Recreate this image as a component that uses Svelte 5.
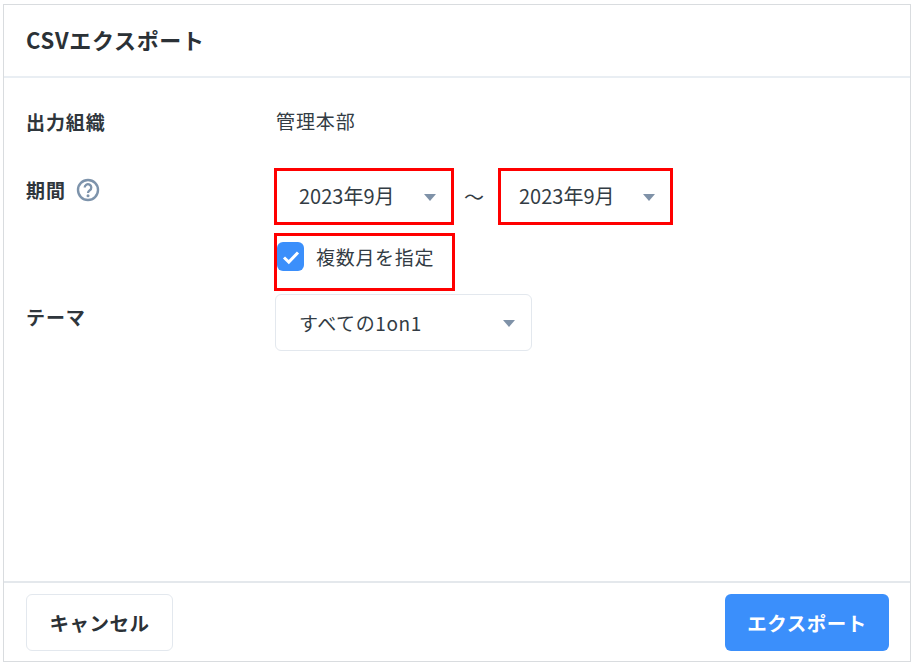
<script>
  const rows = { org: '管理本部' };
</script>

<div class="card">
  <header class="head"><h1>CSVエクスポート</h1></header>
  <main class="body">
    <div class="row org">
      <div class="label">出力組織</div>
      <div class="value">{rows.org}</div>
    </div>
    <div class="row period">
      <div class="label">期間
        <svg class="help" viewBox="0 0 24 24" width="24" height="24" aria-hidden="true">
          <circle cx="12" cy="12" r="10" fill="none" stroke="#7d93ab" stroke-width="2.4"/>
          <path d="M8.7 9.6a3.3 3.3 0 1 1 5.1 2.7c-1.2.8-1.8 1.3-1.8 2.6" fill="none" stroke="#7d93ab" stroke-width="2.3"/>
          <circle cx="12" cy="17.8" r="1.5" fill="#7d93ab"/>
        </svg>
      </div>
      <div class="ctrl">
        <div class="range">
          <div class="select first"><span>2023年9月</span><i class="caret"></i><b class="mark"></b></div>
          <span class="tilde">〜</span>
          <div class="select second"><span>2023年9月</span><i class="caret"></i><b class="mark"></b></div>
        </div>
        <div class="check">
          <span class="box">
            <svg viewBox="0 0 24 24" width="24" height="24" aria-hidden="true"><path d="M5 12.5l4.8 4.6L19 7.5" fill="none" stroke="#fff" stroke-width="3"/></svg>
          </span>
          <span class="check-text">複数月を指定</span>
          <b class="mark"></b>
        </div>
      </div>
    </div>
    <div class="row theme">
      <div class="label">テーマ</div>
      <div class="select wide"><span>すべての1on1</span><i class="caret"></i></div>
    </div>
  </main>
  <footer class="foot">
    <button class="btn cancel">キャンセル</button>
    <button class="btn primary">エクスポート</button>
  </footer>
</div>

<style>
  :global(body) { margin: 0; background: #fff; }
  * { box-sizing: border-box; }
  .card {
    width: 908px; height: 658px; margin: 4px 0 0 3px;
    border: 1px solid #d9dcdf; display: flex; flex-direction: column;
    font-family: "Noto Sans CJK JP", "Noto Sans", sans-serif;
    color: #333c44; font-size: 19px; letter-spacing: 0.7px;
  }
  .head { height: 73px; border-bottom: 2px solid #e9eef3; padding: 0 0 4px 22px; display: flex; align-items: center; }
  h1 { margin: 0; font-size: 22px; font-weight: 700; color: #2b3136; letter-spacing: 0.7px; }
  .body { flex: 1; padding-top: 26px; }
  .row { display: grid; grid-template-columns: 249px 1fr; padding-left: 22px; }
  .label { font-weight: 600; color: #2f363c; display: flex; align-items: center; gap: 10px; height: 34px; font-size: 19px; letter-spacing: 0.9px; }
  .value { height: 34px; line-height: 34px; padding-left: 1px; letter-spacing: 0.9px; }
  .period { margin-top: 30px; }
  .period .label { height: 28px; margin-top: 7px; }
  .help { margin-top: 2px; }
  .select { position: relative; height: 56px; border: 1px solid #e3e8ee; border-radius: 6px; display: flex; align-items: center; padding: 0 0 1px 23px; background: #fff; font-size: 20px; letter-spacing: 0; }
  .first { width: 178px; }
  .second { width: 174px; padding-left: 20px; }
  .wide { width: 257px; height: 57px; padding-left: 23px; font-size: 19px; letter-spacing: 0.6px; }
  .caret { position: absolute; right: 16px; top: 25px; border: 6px solid transparent; border-top: 7px solid #7f92a8; border-bottom: 0; }
  .range { display: flex; align-items: center; }
  .tilde { width: 45px; padding-right: 3px; text-align: center; letter-spacing: 0; font-size: 20px; }
  .mark { position: absolute; inset: -1px -2px -2px -2px; border: 3px solid #f00; pointer-events: none; }
  .second .mark { inset: -1px -2px -2px -1px; }
  .check { position: relative; width: 178px; height: 54px; margin-top: 10px; display: flex; align-items: center; padding: 0 0 9px 2px; gap: 12px; }
  .check .mark { inset: -1px -2px -3px -1px; }
  .box { width: 27px; height: 29px; border-radius: 6px; background: #3b8ffb; display: flex; align-items: center; justify-content: center; }
  .theme { margin-top: 6px; }
  .theme .label { height: 44px; }
  .foot { height: 80px; border-top: 2px solid #e4e8ec; display: flex; justify-content: space-between; align-items: flex-start; padding: 11px 21px 0 22px; }
  .btn { height: 57px; border-radius: 6px; font: inherit; font-weight: 700; letter-spacing: 0.5px; font-size: 19.5px; }
  .cancel { width: 147px; background: #fff; border: 1px solid #e3e8ee; color: #2b3136; }
  .primary { width: 164px; background: #3b8ffb; border: 0; color: #fff; }
</style>
